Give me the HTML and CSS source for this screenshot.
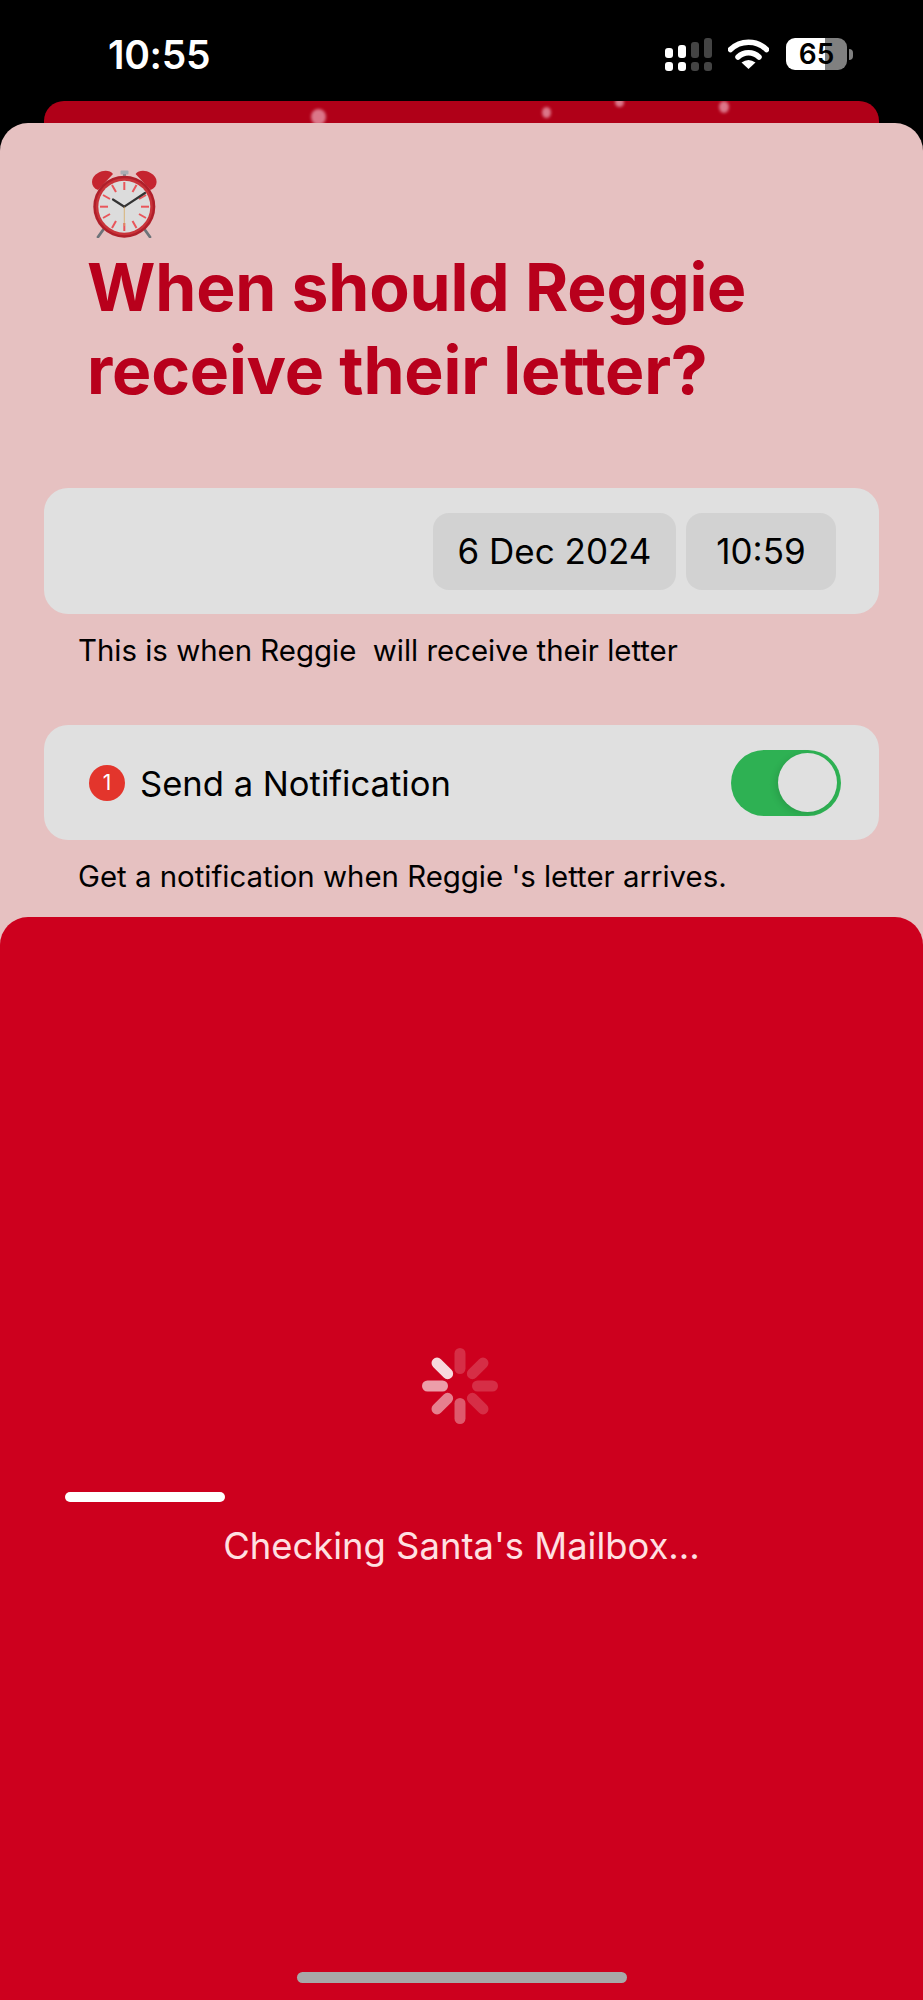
FILE: index.html
```html
<!DOCTYPE html>
<html lang="en">
<head>
    <meta charset="UTF-8">
    <meta name="viewport" content="width=device-width, initial-scale=1.0">
    <title>Schedule Letter</title>
    <link rel="stylesheet" href="styles.css">
</head>
<body>

<div class="screen">

    <div class="status-bar">
        <span class="clock">10:55</span>
        <div class="status-icons">
            <div class="signal">
                <div class="signal-col"><i class="bar-a"></i><i class="dot"></i></div>
                <div class="signal-col"><i class="bar-b"></i><i class="dot"></i></div>
                <div class="signal-col off"><i class="bar-c"></i><i class="dot"></i></div>
                <div class="signal-col off"><i class="bar-d"></i><i class="dot"></i></div>
            </div>
            <svg class="wifi" viewBox="0 0 41 31" width="41" height="31">
                <path d="M2.5 11.5 A26 26 0 0 1 38.5 11.5" fill="none" stroke="#fff" stroke-width="5.5" stroke-linecap="round"/>
                <path d="M10 19 A15 15 0 0 1 31 19" fill="none" stroke="#fff" stroke-width="5.5" stroke-linecap="round"/>
                <path d="M13.5 24.5 Q20.5 19.5 27.5 24.5 L20.5 31 Z" fill="#fff"/>
            </svg>
            <div class="battery-wrap">
                <div class="battery">65</div>
                <div class="battery-nub"></div>
            </div>
        </div>
    </div>

    <!-- card behind the sheet, with falling snow -->
    <div class="back-card">
        <span class="snow snow-1"></span>
        <span class="snow snow-2"></span>
        <span class="snow snow-3"></span>
        <span class="snow snow-4"></span>
    </div>

    <div class="sheet">
        <svg class="alarm" viewBox="31 20 68 68" width="68" height="68">
            <path d="M43 80 L38 87" stroke="#6d7379" stroke-width="2.8" stroke-linecap="round"/>
            <path d="M85 80 L90 87" stroke="#6d7379" stroke-width="2.8" stroke-linecap="round"/>
            <rect x="60.5" y="20.5" width="8" height="4" rx="1" fill="#a9adb3"/>
            <rect x="63" y="24" width="3" height="7" fill="#8d9299"/>
            <path d="M38 40 C30 37 30 27 38 23 C43 20 50 20 53 24 Z" fill="#c5242f"/>
            <path d="M90.6 40 C98.6 37 98.6 27 90.6 23 C85.6 20 78.6 20 75.6 24 Z" fill="#c5242f"/>
            <circle cx="64.3" cy="56.7" r="31" fill="#b01f2a"/>
            <circle cx="64.3" cy="56.7" r="28.5" fill="#c9343a"/>
            <circle cx="64.3" cy="56.7" r="26" fill="#dcdcdc"/>
            <g stroke="#e9565b" stroke-width="2">
                <path d="M64.3 32 V40"/>
                <path d="M64.3 73 V81"/>
                <path d="M40 56.7 H48"/>
                <path d="M81 56.7 H89"/>
                <path d="M52 35 L56 42"/>
                <path d="M76.5 35 L72.5 42"/>
                <path d="M52 78 L56 71"/>
                <path d="M76.5 78 L72.5 71"/>
                <path d="M43 45 L50 49"/>
                <path d="M86 45 L79 49"/>
                <path d="M43 68 L50 64"/>
                <path d="M86 68 L79 64"/>
            </g>
            <path d="M64.3 56.7 L53 49.5" stroke="#333" stroke-width="2.2" stroke-linecap="round"/>
            <path d="M64.3 56.7 L85 43" stroke="#333" stroke-width="2.2" stroke-linecap="round"/>
            <path d="M64.3 56.7 V76" stroke="#d8a860" stroke-width="0.8"/>
        </svg>
        <h1 class="sheet-title">When should Reggie<br>receive their letter?</h1>

        <div class="row row-date">
            <span class="pill pill-date">6 Dec 2024</span>
            <span class="pill pill-time">10:59</span>
        </div>
        <p class="hint">This is when Reggie&nbsp; will receive their letter</p>

        <div class="row row-notify">
            <span class="badge">1</span>
            <span class="row-label">Send a Notification</span>
            <div class="toggle"><div class="toggle-knob"></div></div>
        </div>
        <p class="hint hint-notify">Get a notification when Reggie 's letter arrives.</p>
    </div>

    <div class="loading-sheet">
        <svg class="spinner" viewBox="-40 -40 80 80" width="80" height="80">
            <rect class="spoke" x="-5.5" y="-38" width="11" height="26" rx="5.5" fill-opacity="0.18"/>
            <rect class="spoke" x="-5.5" y="-38" width="11" height="26" rx="5.5" transform="rotate(45)" fill-opacity="0.18"/>
            <rect class="spoke" x="-5.5" y="-38" width="11" height="26" rx="5.5" transform="rotate(90)" fill-opacity="0.18"/>
            <rect class="spoke" x="-5.5" y="-38" width="11" height="26" rx="5.5" transform="rotate(135)" fill-opacity="0.18"/>
            <rect class="spoke" x="-5.5" y="-38" width="11" height="26" rx="5.5" transform="rotate(180)" fill-opacity="0.35"/>
            <rect class="spoke" x="-5.5" y="-38" width="11" height="26" rx="5.5" transform="rotate(225)" fill-opacity="0.5"/>
            <rect class="spoke" x="-5.5" y="-38" width="11" height="26" rx="5.5" transform="rotate(270)" fill-opacity="0.62"/>
            <rect class="spoke" x="-5.5" y="-38" width="11" height="26" rx="5.5" transform="rotate(315)" fill-opacity="0.85"/>
        </svg>
        <div class="progress"></div>
        <p class="loading-text">Checking Santa's Mailbox...</p>
        <div class="home-indicator"></div>
    </div>

</div>

</body>
</html>
```

FILE: styles.css
```css
body {
    font-family: Inter, "Liberation Sans", sans-serif;
    margin: 0;
    padding: 0;
    background-color: #000;
    color: #000;
}
.screen {
    position: relative;
    width: 923px;
    height: 2000px;
    overflow: hidden;
    background: #000;
}

/* status bar */
.status-bar {
    height: 101px;
    display: flex;
    justify-content: space-between;
    box-sizing: border-box;
    padding: 38px 70px 0 108px;
    color: #fff;
}
.clock {
    font-size: 39px;
    line-height: 34px;
    font-weight: 600;
    letter-spacing: -0.3px;
}
.status-icons {
    display: flex;
    align-items: flex-start;
}
.signal {
    display: flex;
    gap: 5px;
    height: 33px;
    margin-right: 16px;
}
.signal-col {
    display: flex;
    flex-direction: column;
    justify-content: flex-end;
    gap: 4px;
    width: 8px;
}
.signal-col i {
    display: block;
    background: #fff;
    border-radius: 3px;
}
.signal-col.off i {
    background: #444;
}
.signal-col .dot { height: 9px; }
.signal-col .bar-a { height: 10px; }
.signal-col .bar-b { height: 13px; }
.signal-col .bar-c { height: 16px; }
.signal-col .bar-d { height: 20px; }
.wifi {
    margin-right: 17px;
}
.battery-wrap {
    display: flex;
    align-items: center;
    gap: 2px;
}
.battery {
    width: 61px;
    height: 32px;
    border-radius: 9px;
    background: linear-gradient(to right, #fff 39px, #808080 39px);
    color: #000;
    font-size: 28px;
    line-height: 32px;
    font-weight: 600;
    text-align: center;
}
.battery-nub {
    width: 4px;
    height: 11px;
    background: #808080;
    border-radius: 0 4px 4px 0;
}

/* card stacked behind the sheet */
.back-card {
    position: relative;
    height: 60px;
    margin: 0 44px;
    background: #b00018;
    border-radius: 20px 20px 0 0;
    overflow: hidden;
}
.snow {
    position: absolute;
    border-radius: 50%;
    background: #f3b6c6;
    opacity: 0.65;
    filter: blur(1.5px);
}
.snow-1 { left: 267px; top: 8px; width: 15px; height: 16px; }
.snow-2 { left: 498px; top: 6px; width: 9px; height: 11px; }
.snow-3 { left: 571px; top: -3px; width: 9px; height: 9px; }
.snow-4 { left: 675px; top: 0; width: 10px; height: 12px; }

/* pale sheet with the form */
.sheet {
    position: absolute;
    top: 123px;
    left: 0;
    right: 0;
    bottom: 0;
    background: #e6c1c1;
    border-radius: 28px 28px 0 0;
    box-sizing: border-box;
    padding: 47px 44px 0;
}
.alarm {
    display: block;
    margin-left: 47px;
}
.sheet-title {
    margin: 8px 0 76px 43px;
    font-size: 66px;
    line-height: 83px;
    font-weight: 700;
    letter-spacing: -0.2px;
    color: #b8001c;
    white-space: nowrap;
}
.row {
    display: flex;
    align-items: center;
    background: #e0e0e0;
    border-radius: 24px;
}
.row-date {
    height: 126px;
    justify-content: flex-end;
    gap: 10px;
    padding-right: 43px;
}
.pill {
    display: block;
    height: 77px;
    line-height: 77px;
    background: #d2d2d2;
    border-radius: 16px;
    font-size: 35px;
    text-align: center;
}
.pill-date { width: 243px; }
.pill-time { width: 150px; }
.hint {
    margin: 19px 0 56px 34px;
    font-size: 29.4px;
    line-height: 36px;
    white-space: nowrap;
}
.row-notify {
    height: 115px;
    padding: 0 38px 0 45px;
}
.badge {
    width: 36px;
    height: 36px;
    border-radius: 50%;
    background: #e3352c;
    color: #fff;
    font-size: 21px;
    line-height: 36px;
    text-align: center;
    margin-right: 15px;
}
.row-label {
    flex: 1;
    font-size: 34.6px;
}
.toggle {
    display: flex;
    justify-content: flex-end;
    align-items: center;
    box-sizing: border-box;
    width: 110px;
    height: 66px;
    padding-right: 4px;
    border-radius: 33px;
    background: #2eb153;
}
.toggle-knob {
    width: 59px;
    height: 59px;
    border-radius: 50%;
    background: #e0e0e0;
    box-shadow: -3px 2px 6px rgba(0, 0, 0, 0.1);
}
.hint-notify {
    margin-top: 19px;
}

/* loading overlay */
.loading-sheet {
    position: absolute;
    top: 917px;
    left: 0;
    right: 0;
    bottom: 0;
    background: #cd001e;
    border-radius: 28px 28px 0 0;
    display: flex;
    flex-direction: column;
}
.spinner {
    display: block;
    margin: 429px 0 0 420px;
}
.spoke {
    fill: #fff;
}
.progress {
    width: 160px;
    height: 10px;
    margin: 66px 0 0 65px;
    background: #fff;
    border-radius: 5px;
}
.loading-text {
    margin: 19px 0 0;
    font-size: 36.4px;
    line-height: 50px;
    color: #ffe0e2;
    text-align: center;
}
.home-indicator {
    width: 330px;
    height: 11px;
    margin: auto auto 17px;
    background: #a8a8a8;
    border-radius: 6px;
}
```
